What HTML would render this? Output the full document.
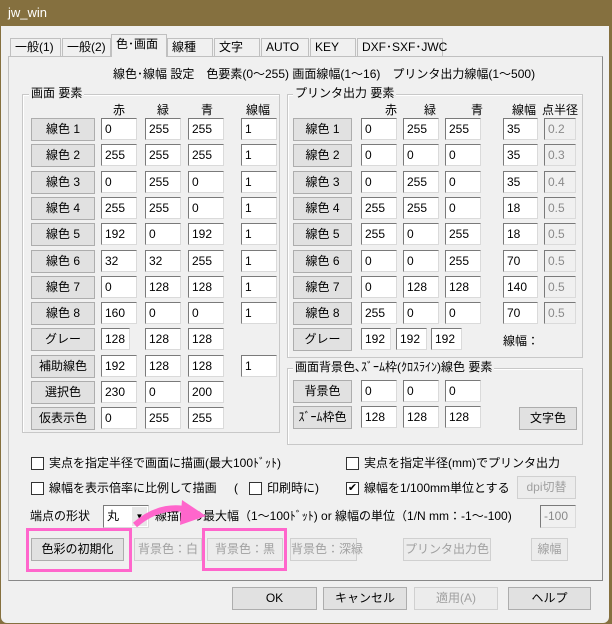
<!DOCTYPE html>
<html><head><meta charset="utf-8"><style>
*{box-sizing:border-box;margin:0;padding:0}
body{width:612px;height:624px;background:#85703f;font-family:"Liberation Sans","Noto Sans CJK JP",sans-serif;font-size:12px;color:#000;position:relative;overflow:hidden}
#win{position:absolute;left:1px;top:26px;width:608px;height:597px;background:#f0f0f0;border-radius:0 0 6px 6px}
.a{position:absolute;white-space:nowrap}
.t{position:absolute;white-space:nowrap;line-height:14px}
.b{position:absolute;background:#e1e1e1;border:1px solid #adadad;text-align:center;white-space:nowrap;line-height:20px;height:23px}
.d{color:#a0a0a0;background:#ececec;border-color:#d0d0d0}
.i{position:absolute;background:#fff;border:1px solid #7a7a7a;border-right-color:#dadada;border-bottom-color:#dadada;height:22px;line-height:20px;padding-left:3px;white-space:nowrap}
.id{background:#f0f0f0;color:#8a8a8a}
.g{position:absolute;border:1px solid #c8c8c8;box-shadow:1px 1px 0 #fff inset}
.gl{position:absolute;background:#f0f0f0;padding:0 2px;line-height:14px;white-space:nowrap}
.tab{position:absolute;top:38px;height:19px;border:1px solid #c0c0c0;border-bottom:none;background:#f0f0f0;line-height:17px;padding-left:4px;white-space:nowrap}
.cb{position:absolute;width:13px;height:13px;border:1px solid #333;background:#fff}
.pk{position:absolute;border:3px solid #ff66cc}
</style></head><body>
<div class="a" style="left:8px;top:5px;color:#fff;font-size:13px">jw_win</div>
<div id="win"></div>
<!-- tabs -->
<div class="tab" style="left:10px;width:51px">一般(1)</div>
<div class="tab" style="left:62px;width:49px">一般(2)</div>
<div class="tab" style="left:167px;width:46px">線種</div>
<div class="tab" style="left:214px;width:46px">文字</div>
<div class="tab" style="left:261px;width:48px">AUTO</div>
<div class="tab" style="left:310px;width:46px">KEY</div>
<div class="tab" style="left:357px;width:86px">DXF･SXF･JWC</div>
<div style="position:absolute;left:8px;top:56px;width:595px;height:525px;border:1px solid #c0c0c0;border-right-color:#888;border-bottom-color:#888;background:#f0f0f0"></div>
<div class="tab" style="left:111px;top:34px;width:56px;height:23px;padding-top:1px">色･画面</div>
<div class="t" style="left:113px;top:67px">線色･線幅 設定　色要素(0〜255) 画面線幅(1〜16)　プリンタ出力線幅(1〜500)</div>

<!-- left group -->
<div class="g" style="left:22px;top:94px;width:258px;height:339px"></div>
<div class="gl" style="left:29px;top:86px">画面 要素</div>
<div class="t" style="left:113px;top:103px">赤</div><div class="t" style="left:157px;top:103px">緑</div><div class="t" style="left:201px;top:103px">青</div><div class="t" style="left:246px;top:103px">線幅</div>

<div class="b" style="left:31px;top:118px;width:64px">線色 1</div><div class="i" style="left:101px;top:118px;width:36px">0</div><div class="i" style="left:145px;top:118px;width:36px">255</div><div class="i" style="left:188px;top:118px;width:36px">255</div><div class="i" style="left:241px;top:118px;width:36px">1</div>
<div class="b" style="left:31px;top:144px;width:64px">線色 2</div><div class="i" style="left:101px;top:144px;width:36px">255</div><div class="i" style="left:145px;top:144px;width:36px">255</div><div class="i" style="left:188px;top:144px;width:36px">255</div><div class="i" style="left:241px;top:144px;width:36px">1</div>
<div class="b" style="left:31px;top:171px;width:64px">線色 3</div><div class="i" style="left:101px;top:171px;width:36px">0</div><div class="i" style="left:145px;top:171px;width:36px">255</div><div class="i" style="left:188px;top:171px;width:36px">0</div><div class="i" style="left:241px;top:171px;width:36px">1</div>
<div class="b" style="left:31px;top:197px;width:64px">線色 4</div><div class="i" style="left:101px;top:197px;width:36px">255</div><div class="i" style="left:145px;top:197px;width:36px">255</div><div class="i" style="left:188px;top:197px;width:36px">0</div><div class="i" style="left:241px;top:197px;width:36px">1</div>
<div class="b" style="left:31px;top:223px;width:64px">線色 5</div><div class="i" style="left:101px;top:223px;width:36px">192</div><div class="i" style="left:145px;top:223px;width:36px">0</div><div class="i" style="left:188px;top:223px;width:36px">192</div><div class="i" style="left:241px;top:223px;width:36px">1</div>
<div class="b" style="left:31px;top:250px;width:64px">線色 6</div><div class="i" style="left:101px;top:250px;width:36px">32</div><div class="i" style="left:145px;top:250px;width:36px">32</div><div class="i" style="left:188px;top:250px;width:36px">255</div><div class="i" style="left:241px;top:250px;width:36px">1</div>
<div class="b" style="left:31px;top:276px;width:64px">線色 7</div><div class="i" style="left:101px;top:276px;width:36px">0</div><div class="i" style="left:145px;top:276px;width:36px">128</div><div class="i" style="left:188px;top:276px;width:36px">128</div><div class="i" style="left:241px;top:276px;width:36px">1</div>
<div class="b" style="left:31px;top:302px;width:64px">線色 8</div><div class="i" style="left:101px;top:302px;width:36px">160</div><div class="i" style="left:145px;top:302px;width:36px">0</div><div class="i" style="left:188px;top:302px;width:36px">0</div><div class="i" style="left:241px;top:302px;width:36px">1</div>
<div class="b" style="left:31px;top:328px;width:64px">グレー</div><div class="i" style="left:101px;top:328px;width:29px">128</div><div class="i" style="left:145px;top:328px;width:36px">128</div><div class="i" style="left:188px;top:328px;width:36px">128</div>
<div class="b" style="left:31px;top:355px;width:64px">補助線色</div><div class="i" style="left:101px;top:355px;width:36px">192</div><div class="i" style="left:145px;top:355px;width:36px">128</div><div class="i" style="left:188px;top:355px;width:36px">128</div><div class="i" style="left:241px;top:355px;width:36px">1</div>
<div class="b" style="left:31px;top:381px;width:64px">選択色</div><div class="i" style="left:101px;top:381px;width:36px">230</div><div class="i" style="left:145px;top:381px;width:36px">0</div><div class="i" style="left:188px;top:381px;width:36px">200</div>
<div class="b" style="left:31px;top:407px;width:64px">仮表示色</div><div class="i" style="left:101px;top:407px;width:36px">0</div><div class="i" style="left:145px;top:407px;width:36px">255</div><div class="i" style="left:188px;top:407px;width:36px">255</div>

<!-- right group -->
<div class="g" style="left:287px;top:94px;width:296px;height:264px"></div>
<div class="gl" style="left:293px;top:86px">プリンタ出力 要素</div>
<div class="t" style="left:385px;top:103px">赤</div><div class="t" style="left:424px;top:103px">緑</div><div class="t" style="left:471px;top:103px">青</div><div class="t" style="left:512px;top:103px">線幅</div><div class="t" style="left:542px;top:103px">点半径</div>

<div class="b" style="left:293px;top:118px;width:59px">線色 1</div><div class="i" style="left:361px;top:118px;width:36px">0</div><div class="i" style="left:403px;top:118px;width:36px">255</div><div class="i" style="left:445px;top:118px;width:36px">255</div><div class="i" style="left:503px;top:118px;width:35px">35</div><div class="i id" style="left:544px;top:118px;width:32px">0.2</div>
<div class="b" style="left:293px;top:144px;width:59px">線色 2</div><div class="i" style="left:361px;top:144px;width:36px">0</div><div class="i" style="left:403px;top:144px;width:36px">0</div><div class="i" style="left:445px;top:144px;width:36px">0</div><div class="i" style="left:503px;top:144px;width:35px">35</div><div class="i id" style="left:544px;top:144px;width:32px">0.3</div>
<div class="b" style="left:293px;top:171px;width:59px">線色 3</div><div class="i" style="left:361px;top:171px;width:36px">0</div><div class="i" style="left:403px;top:171px;width:36px">255</div><div class="i" style="left:445px;top:171px;width:36px">0</div><div class="i" style="left:503px;top:171px;width:35px">35</div><div class="i id" style="left:544px;top:171px;width:32px">0.4</div>
<div class="b" style="left:293px;top:197px;width:59px">線色 4</div><div class="i" style="left:361px;top:197px;width:36px">255</div><div class="i" style="left:403px;top:197px;width:36px">255</div><div class="i" style="left:445px;top:197px;width:36px">0</div><div class="i" style="left:503px;top:197px;width:35px">18</div><div class="i id" style="left:544px;top:197px;width:32px">0.5</div>
<div class="b" style="left:293px;top:223px;width:59px">線色 5</div><div class="i" style="left:361px;top:223px;width:36px">255</div><div class="i" style="left:403px;top:223px;width:36px">0</div><div class="i" style="left:445px;top:223px;width:36px">255</div><div class="i" style="left:503px;top:223px;width:35px">18</div><div class="i id" style="left:544px;top:223px;width:32px">0.5</div>
<div class="b" style="left:293px;top:250px;width:59px">線色 6</div><div class="i" style="left:361px;top:250px;width:36px">0</div><div class="i" style="left:403px;top:250px;width:36px">0</div><div class="i" style="left:445px;top:250px;width:36px">255</div><div class="i" style="left:503px;top:250px;width:35px">70</div><div class="i id" style="left:544px;top:250px;width:32px">0.5</div>
<div class="b" style="left:293px;top:276px;width:59px">線色 7</div><div class="i" style="left:361px;top:276px;width:36px">0</div><div class="i" style="left:403px;top:276px;width:36px">128</div><div class="i" style="left:445px;top:276px;width:36px">128</div><div class="i" style="left:503px;top:276px;width:35px">140</div><div class="i id" style="left:544px;top:276px;width:32px">0.5</div>
<div class="b" style="left:293px;top:302px;width:59px">線色 8</div><div class="i" style="left:361px;top:302px;width:36px">255</div><div class="i" style="left:403px;top:302px;width:36px">0</div><div class="i" style="left:445px;top:302px;width:36px">0</div><div class="i" style="left:503px;top:302px;width:35px">70</div><div class="i id" style="left:544px;top:302px;width:32px">0.5</div>
<div class="b" style="left:293px;top:328px;width:59px">グレー</div><div class="i" style="left:361px;top:328px;width:30px">192</div><div class="i" style="left:396px;top:328px;width:31px">192</div><div class="i" style="left:431px;top:328px;width:31px">192</div>
<div class="t" style="left:503px;top:334px">線幅：</div>

<div class="g" style="left:287px;top:368px;width:296px;height:77px"></div>
<div class="gl" style="left:293px;top:360px">画面背景色､ｽﾞｰﾑ枠(ｸﾛｽﾗｲﾝ)線色 要素</div>
<div class="b" style="left:293px;top:380px;width:59px">背景色</div><div class="i" style="left:361px;top:380px;width:36px">0</div><div class="i" style="left:403px;top:380px;width:36px">0</div><div class="i" style="left:445px;top:380px;width:36px">0</div>
<div class="b" style="left:293px;top:406px;width:59px">ｽﾞｰﾑ枠色</div><div class="i" style="left:361px;top:406px;width:36px">128</div><div class="i" style="left:403px;top:406px;width:36px">128</div><div class="i" style="left:445px;top:406px;width:36px">128</div>
<div class="b" style="left:519px;top:407px;width:58px">文字色</div>

<!-- checkboxes -->
<div class="cb" style="left:31px;top:457px"></div><div class="t" style="left:49px;top:456px">実点を指定半径で画面に描画(最大100ﾄﾞｯﾄ)</div>
<div class="cb" style="left:346px;top:457px"></div><div class="t" style="left:364px;top:456px">実点を指定半径(mm)でプリンタ出力</div>
<div class="cb" style="left:31px;top:482px"></div><div class="t" style="left:49px;top:481px">線幅を表示倍率に比例して描画</div>
<div class="t" style="left:234px;top:481px">(</div>
<div class="cb" style="left:249px;top:482px"></div><div class="t" style="left:267px;top:481px">印刷時に)</div>
<div class="cb" style="left:346px;top:482px;text-align:center;line-height:11px;font-size:11px">✔</div><div class="t" style="left:364px;top:481px">線幅を1/100mm単位とする</div>
<div class="b d" style="left:517px;top:476px;width:59px">dpi切替</div>

<div class="t" style="left:30px;top:509px">端点の形状</div>
<div class="i" style="left:103px;top:505px;width:46px;height:23px">丸</div>
<div class="a" style="left:132px;top:507px;width:15px;height:19px;background:#e8e8e8;text-align:center;font-size:8px;line-height:19px">▼</div>
<div class="t" style="left:143px;top:509px">　線描画の最大幅（1〜100ﾄﾞｯﾄ) or 線幅の単位（1/N mm：-1〜-100)</div>
<div class="i id" style="left:540px;top:505px;width:36px;height:23px">-100</div>

<div class="b" style="left:31px;top:538px;width:93px">色彩の初期化</div>
<div class="b d" style="left:134px;top:538px;width:68px">背景色：白</div>
<div class="b d" style="left:207px;top:538px;width:76px">背景色：黒</div>
<div class="b d" style="left:290px;top:538px;width:67px">背景色：深緑</div>
<div class="b d" style="left:403px;top:538px;width:88px">プリンタ出力色</div>
<div class="b d" style="left:531px;top:538px;width:37px">線幅</div>

<div class="pk" style="left:26px;top:528px;width:106px;height:44px"></div>
<div class="pk" style="left:202px;top:528px;width:85px;height:43px"></div>
<svg style="position:absolute;left:120px;top:495px" width="100" height="40">
<path d="M15 30 Q40 8 70 15" fill="none" stroke="#ff66cc" stroke-width="6"/>
<path d="M62 5 L86 21 L60 30 Z" fill="#ff66cc"/>
</svg>

<div class="b" style="left:232px;top:587px;width:85px">OK</div>
<div class="b" style="left:323px;top:587px;width:84px">キャンセル</div>
<div class="b d" style="left:414px;top:587px;width:84px">適用(A)</div>
<div class="b" style="left:508px;top:587px;width:83px">ヘルプ</div>
</body></html>
